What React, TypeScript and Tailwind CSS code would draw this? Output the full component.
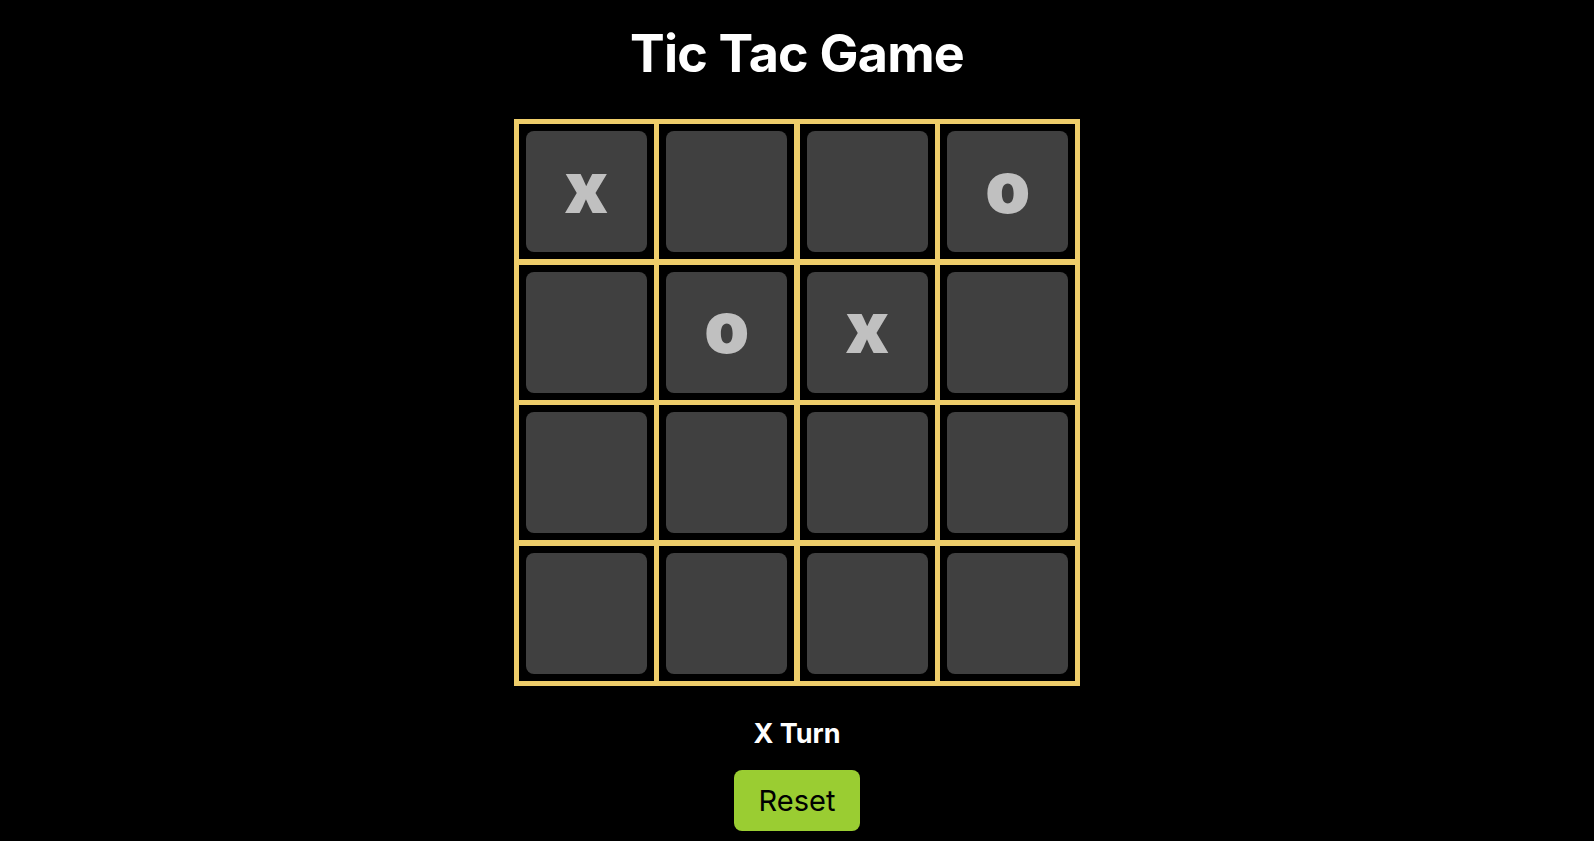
import React, { useState } from 'react'

type Mark = 'x' | 'o' | ''

const START: Mark[] = ['x', '', '', 'o', '', 'o', 'x', '', '', '', '', '', '', '', '', '']

const App = () => {
  const [board, setBoard] = useState<Mark[]>(START)
  const [turn, setTurn] = useState<'X' | 'O'>('X')

  const play = (i: number) => {
    if (board[i]) return
    const next = [...board]
    next[i] = turn === 'X' ? 'x' : 'o'
    setBoard(next)
    setTurn(turn === 'X' ? 'O' : 'X')
  }

  const reset = () => {
    setBoard(Array(16).fill(''))
    setTurn('X')
  }

  return (
    <div
      className="min-h-screen w-full bg-black flex flex-col items-center text-white"
      style={{ fontFamily: 'Inter, "Noto Sans", sans-serif' }}
    >
      <h1 className="mt-[28px] text-[52px] leading-none font-bold tracking-[-0.015em]">Tic Tac Game</h1>

      <div className="mt-[39px] grid grid-cols-4 gap-[5.5px] p-[5px] bg-[#eecd6a]">
        {board.map((mark, i) => (
          <div key={i} className="bg-black p-[7px]">
            <button
              type="button"
              onClick={() => play(i)}
              className="w-[121px] h-[121px] rounded-lg bg-[#404040] flex items-center justify-center text-[#c0c0c0] text-[72px] font-black leading-none pb-[10px]"
            >
              {mark}
            </button>
          </div>
        ))}
      </div>

      <p className="mt-[34px] text-[27px] leading-none font-bold">{turn} Turn</p>

      <button
        type="button"
        onClick={reset}
        className="mt-[23px] w-[126px] h-[61px] rounded-lg bg-[#9acd32] text-black text-[29px] leading-none"
      >
        Reset
      </button>
    </div>
  )
}

export default App
